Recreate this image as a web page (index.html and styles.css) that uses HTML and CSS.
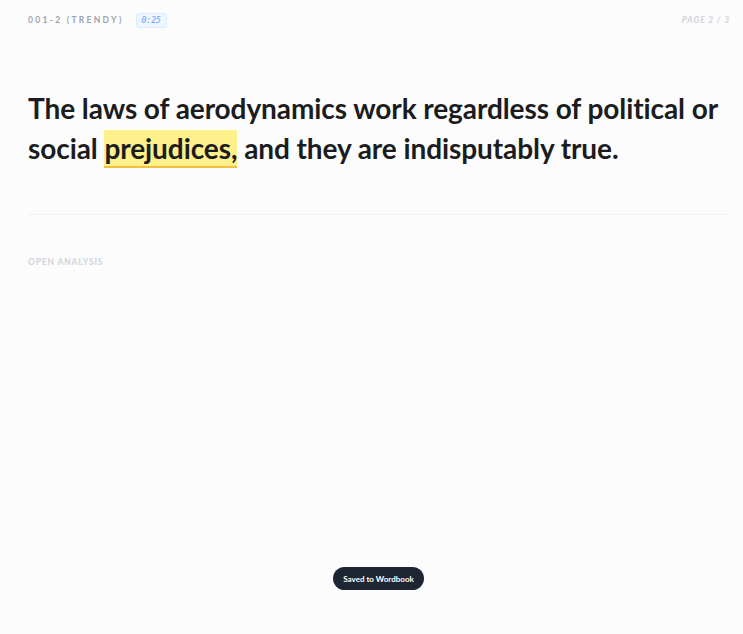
FILE: index.html
```html
<!DOCTYPE html>
<html lang="en">
<head>
    <meta charset="UTF-8">
    <meta name="viewport" content="width=device-width, initial-scale=1.0">
    <title>Reading Card</title>
    <link rel="stylesheet" href="styles.css">
</head>
<body>
    <div class="page">
        <header class="topbar">
            <div class="topbar__left">
                <span class="topbar__code">001-2 (TRENDY)</span>
                <span class="timer">0:25</span>
            </div>
            <span class="topbar__page">PAGE 2 / 3</span>
        </header>

        <h1 class="sentence">
            The laws of aerodynamics work regardless of political or social
            <span class="sentence__mark">prejudices,</span>
            and they are indisputably true.
        </h1>

        <hr class="divider">

        <div class="analysis">Open Analysis</div>
    </div>

    <div class="toast">Saved to Wordbook</div>
</body>
</html>
```

FILE: styles.css
```css
:root {
    --color-bg: #fcfcfd;
    --color-text: #1b1c20;
    --color-muted: #9ca3af;
    --color-faint: #d3d6dc;
    --color-line: #f1f2f4;
    --color-mark: #fef08a;
    --color-mark-line: #f3c03e;
    --color-blue: #60a5fa;
}

body {
    margin: 0;
    background-color: var(--color-bg);
    color: var(--color-text);
    font-family: "Lato", "Noto Sans", sans-serif;
}

.page {
    padding: 12px 13px 0 28px;
}

.topbar {
    display: flex;
    justify-content: space-between;
    align-items: center;
    height: 16px;
}

.topbar__left {
    display: flex;
    align-items: center;
    gap: 12px;
}

.topbar__code {
    font-size: 8.5px;
    font-weight: 700;
    letter-spacing: 2.3px;
    color: var(--color-muted);
}

.timer {
    display: inline-block;
    padding: 2px 5px;
    font-family: "DejaVu Sans Mono", monospace;
    font-size: 8px;
    font-style: italic;
    color: var(--color-blue);
    background-color: #eff6ff;
    border: 1px solid #dbeafe;
    border-radius: 3px;
}

.topbar__page {
    font-size: 8.5px;
    font-weight: 900;
    font-style: italic;
    letter-spacing: 0.9px;
    color: var(--color-faint);
}

.sentence {
    margin: 60px 0 0;
    font-size: 28px;
    line-height: 40px;
    font-weight: 700;
    letter-spacing: -0.08px;
}

.sentence__mark {
    padding: 1px 0;
    background-color: var(--color-mark);
    border-bottom: 2px solid var(--color-mark-line);
}

.divider {
    margin: 46px 0 0;
    border: none;
    border-top: 1px solid var(--color-line);
}

.analysis {
    margin-top: 42px;
    font-size: 8.5px;
    font-weight: 900;
    letter-spacing: 0.8px;
    text-transform: uppercase;
    color: var(--color-faint);
}

.toast {
    position: fixed;
    left: 333px;
    top: 567px;
    width: 91px;
    height: 23px;
    display: flex;
    align-items: center;
    justify-content: center;
    font-size: 8px;
    font-weight: 700;
    color: #fff;
    background-color: #1e2533;
    border-radius: 12px;
}
```
